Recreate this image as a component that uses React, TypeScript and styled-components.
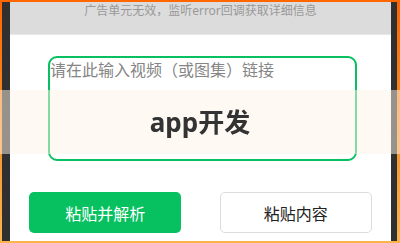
import styled, { createGlobalStyle } from 'styled-components';

const GlobalStyle = createGlobalStyle`
  html, body {
    margin: 0;
    padding: 0;
    width: 400px;
    height: 243px;
    overflow: hidden;
  }
  body {
    font-family: 'Noto Sans', 'Noto Sans CJK SC', sans-serif;
    background: linear-gradient(180deg, #ff6500 0%, #f68a22 45%, #fbb54c 100%);
  }
`;

const Frame = styled.div`
  height: 243px;
  box-sizing: border-box;
  padding: 2px 3px 2px 2px;
`;
const Device = styled.div`
  height: 100%;
  box-sizing: border-box;
  background: #303030;
  padding: 0 6px 0 8px;
`;
const Screen = styled.div`
  height: 100%;
  background: #fff;
  display: flex;
  flex-direction: column;
`;
const AdBar = styled.div`
  height: 33px;
  box-sizing: border-box;
  background: #dcdcdc;
  border-bottom: 1px solid #e8e8e8;
  color: #999;
  font-size: 12px;
  line-height: 17px;
  text-align: center;
`;
const InputBox = styled.div`
  width: 80%;
  height: 101px;
  margin: 21px 0 0 10%;
  border: 2px solid #07c160;
  border-radius: 9px;
`;
const Placeholder = styled.div`
  color: #858585;
  font-size: 16px;
  line-height: 22px;
  padding-top: 1px;
`;
const Actions = styled.div`
  display: flex;
  justify-content: space-around;
  margin-top: 31px;
`;
const Button = styled.button<{ primary?: boolean }>`
  all: unset;
  box-sizing: border-box;
  width: 40%;
  height: 41px;
  display: flex;
  align-items: center;
  justify-content: center;
  border-radius: 5px;
  font-family: 'Noto Sans', 'Noto Sans CJK SC', sans-serif;
  font-size: 16px;
  color: ${(p) => (p.primary ? '#fff' : '#222')};
  background: ${(p) => (p.primary ? '#07c160' : '#fff')};
  border: ${(p) => (p.primary ? 'none' : '1px solid #dcdcdc')};
`;
const Toast = styled.div`
  position: fixed;
  left: 0;
  right: 0;
  top: 90px;
  height: 64px;
  display: flex;
  align-items: center;
  justify-content: center;
  background: rgba(255, 244, 234, 0.5);
  color: #333;
  font-size: 26px;
  font-weight: 700;
  line-height: 30px;
`;

const App = () => {
  return (
    <>
      <GlobalStyle />
      <Frame>
        <Device>
          <Screen>
            <AdBar>广告单元无效，监听error回调获取详细信息</AdBar>
            <InputBox>
              <Placeholder>请在此输入视频（或图集）链接</Placeholder>
            </InputBox>
            <Actions>
              <Button primary>粘贴并解析</Button>
              <Button>粘贴内容</Button>
            </Actions>
          </Screen>
        </Device>
      </Frame>
      <Toast>app开发</Toast>
    </>
  );
};

export default App;
